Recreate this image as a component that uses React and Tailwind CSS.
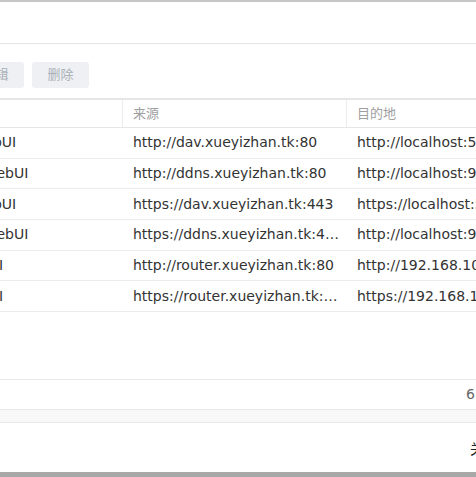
import React from 'react';

const rows = [
  { name: 'DAV WebUI', src: 'http://dav.xueyizhan.tk:80', dst: 'http://localhost:5000' },
  { name: 'DDNS WebUI', src: 'http://ddns.xueyizhan.tk:80', dst: 'http://localhost:9000' },
  { name: 'DAV WebUI', src: 'https://dav.xueyizhan.tk:443', dst: 'https://localhost:5001' },
  { name: 'DDNS WebUI', src: 'https://ddns.xueyizhan.tk:443', dst: 'http://localhost:9000' },
  { name: 'Router UI', src: 'http://router.xueyizhan.tk:80', dst: 'http://192.168.10.1:80' },
  { name: 'Router UI', src: 'https://router.xueyizhan.tk:443', dst: 'https://192.168.10.1:443' },
];

export default function App() {
  return (
    <div className="w-[476px] h-[477px] overflow-hidden bg-white flex flex-col text-[#333] font-['DejaVu_Sans','Noto_Sans_CJK_SC',sans-serif]">
      <div className="h-[2px] bg-[#c6c6c6] shrink-0" />
      {/* dialog title bar */}
      <div className="h-[42px] shrink-0 border-b border-[#e6e6e6]" />

      {/* toolbar */}
      <div className="h-[54px] shrink-0 flex items-start pt-[18px] -ml-[33px] gap-2">
        <button className="h-[26px] w-[57px] rounded-[3px] bg-[#eef0f3] text-[13px] text-[#aab0b8]">编辑</button>
        <button className="h-[26px] w-[57px] rounded-[3px] bg-[#eef0f3] text-[13px] text-[#aab0b8]">删除</button>
      </div>

      {/* table */}
      <div className="-ml-[70px] w-[700px] shrink-0">
        <div className="h-[30px] flex border-t-2 border-b border-[#e6e6e6] text-[13px] text-[#a0a0a0]">
          <div className="w-[193px] border-r border-[#ececec]" />
          <div className="w-[224px] border-r border-[#ececec] pl-[10px] flex items-center">来源</div>
          <div className="flex-1 pl-[10px] flex items-center">目的地</div>
        </div>
        {rows.map((r, i) => (
          <div key={i} className="h-[30.7px] flex items-center border-b border-[#ededed] text-[14px]">
            <div className="w-[193px] pl-[8px] whitespace-nowrap">{r.name}</div>
            <div className="w-[224px] pl-[10px] pr-[8px] truncate">{r.src}</div>
            <div className="flex-1 pl-[10px] whitespace-nowrap">{r.dst}</div>
          </div>
        ))}
      </div>

      <div className="flex-1" />

      {/* footer */}
      <div className="h-[31px] shrink-0 border-t border-b border-[#e8e8e8] flex items-center justify-end pr-[1px] text-[14px] text-[#666]">
        6
      </div>
      <div className="h-[13px] shrink-0 bg-[#f8f8f8] border-b border-[#e8e8e8]" />
      <div className="h-[49px] shrink-0 flex items-center justify-end -mr-[22px]">
        <button className="text-[14px] text-[#222] pt-[4px]">关闭</button>
      </div>
      <div className="h-[5px] shrink-0 bg-[#a8a8a8]" />
    </div>
  );
}
